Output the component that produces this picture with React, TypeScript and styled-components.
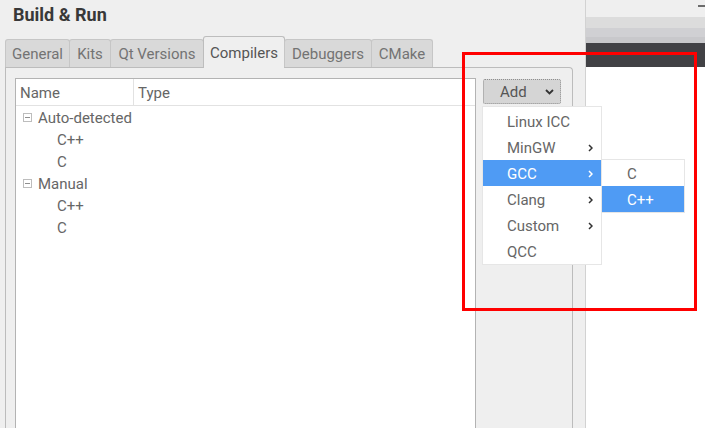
import React from "react";
import styled, { createGlobalStyle } from "styled-components";

const Global = createGlobalStyle`
  html, body { margin: 0; padding: 0; background: #efefef; }
  body { font-family: Roboto, "Liberation Sans", sans-serif; -webkit-font-smoothing: antialiased; }
  * { box-sizing: border-box; }
`;

const Root = styled.div`
  position: relative;
  display: flex;
  width: 705px;
  height: 428px;
  overflow: hidden;
  background: #efefef;
`;

const Dialog = styled.div`
  display: flex;
  flex-direction: column;
  width: 586px;
  height: 100%;
  border-right: 1px solid #d2d2d2;
  background: #efefef;
`;

const Title = styled.div`
  padding: 4px 0 0 13px;
  height: 26px;
  font-size: 18px;
  line-height: 22px;
  font-weight: 700;
  color: #383838;
`;

const TabBar = styled.div`
  display: flex;
  align-items: flex-end;
  margin: 10px 0 0 5px;
  height: 31px;
  position: relative;
  z-index: 2;
`;

const Tab = styled.div<{ $active?: boolean; $w: number }>`
  display: flex;
  align-items: center;
  justify-content: center;
  width: ${(p) => p.$w}px;
  padding-top: 1px;
  height: ${(p) => (p.$active ? "32px" : "28px")};
  margin-bottom: ${(p) => (p.$active ? "-1px" : "0")};
  font-size: 15px;
  color: ${(p) => (p.$active ? "#555555" : "#737373")};
  background: ${(p) => (p.$active ? "#efefef" : "#d9d9d9")};
  border: 1px solid ${(p) => (p.$active ? "#bdbdbd" : "#c6c6c6")};
  border-bottom: none;
  border-radius: 3px 3px 0 0;
  margin-left: -1px;
  &:first-child { margin-left: 0; }
`;

const Pane = styled.div`
  flex: 1;
  display: flex;
  gap: 7px;
  margin-left: 5px;
  width: 568px;
  padding: 10px 11px 0 9px;
  border: 1px solid #bcbcbc;
  border-bottom: none;
  border-radius: 0 4px 0 0;
  position: relative;
  z-index: 1;
`;

const List = styled.div`
  width: 461px;
  background: #ffffff;
  border: 1px solid #b3b3b3;
  border-bottom: none;
`;

const Header = styled.div`
  display: flex;
  height: 27px;
  border-bottom: 1px solid #e2e2e2;
  font-size: 15px;
  color: #666666;
`;

const HeaderCell = styled.div<{ $w?: number }>`
  display: flex;
  align-items: center;
  padding: 2px 0 0 4px;
  width: ${(p) => (p.$w ? `${p.$w}px` : "auto")};
  flex: ${(p) => (p.$w ? "none" : "1")};
  border-right: ${(p) => (p.$w ? "1px solid #e2e2e2" : "none")};
`;

const Row = styled.div<{ $indent: number }>`
  display: flex;
  align-items: center;
  height: 22px;
  padding-top: 1px;
  padding-left: ${(p) => p.$indent}px;
  font-size: 15px;
  color: #666666;
`;

const Expander = styled.span`
  position: relative;
  display: inline-block;
  width: 9px;
  height: 9px;
  margin-right: 6px;
  border: 1px solid #bdbdbd;
  &::after {
    content: "";
    position: absolute;
    left: 1px;
    right: 1px;
    top: 3px;
    height: 1px;
    background: #8f8f8f;
  }
`;

const ButtonCol = styled.div`
  position: relative;
  width: 78px;
  padding-top: 1px;
`;

const AddButton = styled.div`
  display: flex;
  align-items: center;
  justify-content: space-between;
  height: 25px;
  padding: 1px 6px 0 16px;
  background: #d5d5d5;
  border: 1px dotted #8e8e8e;
  border-radius: 2px;
  font-size: 15px;
  color: #555555;
`;

const Menu = styled.div`
  position: absolute;
  top: 28px;
  left: -1px;
  width: 120px;
  padding-top: 1px;
  background: #ffffff;
  border: 1px solid #e6e6e6;
  z-index: 5;
`;

const MenuItem = styled.div<{ $active?: boolean }>`
  position: relative;
  display: flex;
  align-items: center;
  justify-content: space-between;
  height: 26px;
  padding: 2px 8px 0 24px;
  font-size: 15px;
  color: ${(p) => (p.$active ? "#ffffff" : "#666666")};
  background: ${(p) => (p.$active ? "#4f9bf4" : "transparent")};
`;

const SubMenu = styled.div`
  position: absolute;
  top: -1px;
  left: 118px;
  width: 84px;
  background: #ffffff;
  border: 1px solid #e6e6e6;
`;

const SubItem = styled.div<{ $active?: boolean }>`
  display: flex;
  align-items: center;
  height: 26px;
  padding: 2px 0 0 25px;
  font-size: 15px;
  color: ${(p) => (p.$active ? "#ffffff" : "#666666")};
  background: ${(p) => (p.$active ? "#4f9bf4" : "transparent")};
`;

const Backdrop = styled.div`
  flex: 1;
  display: flex;
  flex-direction: column;
`;

const Strip = styled.div<{ $h: number; $bg: string }>`
  position: relative;
  height: ${(p) => p.$h}px;
  background: ${(p) => p.$bg};
`;

const Dash = styled.div`
  position: absolute;
  right: 0;
  top: 5px;
  width: 7px;
  height: 2px;
  background: #6c6c6c;
`;

const Canvas = styled.div`
  flex: 1;
  background: #ffffff;
`;

const Highlight = styled.div`
  position: absolute;
  left: 462px;
  top: 52px;
  width: 235px;
  height: 259px;
  border: 3px solid #ff0000;
  z-index: 10;
  pointer-events: none;
`;

const Chevron = () => (
  <svg width="9" height="6" viewBox="0 0 9 6">
    <polyline points="1,1 4.5,4.5 8,1" fill="none" stroke="#333" strokeWidth="1.8" />
  </svg>
);

const Arrow = ({ color }: { color: string }) => (
  <svg width="5" height="8" viewBox="0 0 5 8">
    <polyline points="1,1 4,4 1,7" fill="none" stroke={color} strokeWidth="1.5" />
  </svg>
);

const tabs: { label: string; w: number }[] = [
  { label: "General", w: 65 },
  { label: "Kits", w: 42 },
  { label: "Qt Versions", w: 94 },
  { label: "Compilers", w: 82 },
  { label: "Debuggers", w: 88 },
  { label: "CMake", w: 62 },
];

const menuItems: { label: string; sub?: boolean }[] = [
  { label: "Linux ICC" },
  { label: "MinGW", sub: true },
  { label: "GCC", sub: true },
  { label: "Clang", sub: true },
  { label: "Custom", sub: true },
  { label: "QCC" },
];

export default function App() {
  return (
    <>
      <Global />
      <Root>
        <Dialog>
          <Title>Build &amp; Run</Title>
          <TabBar>
            {tabs.map((t) => (
              <Tab key={t.label} $w={t.w} $active={t.label === "Compilers"}>
                {t.label}
              </Tab>
            ))}
          </TabBar>
          <Pane>
            <List>
              <Header>
                <HeaderCell $w={118}>Name</HeaderCell>
                <HeaderCell>Type</HeaderCell>
              </Header>
              <Row $indent={7}>
                <Expander />
                Auto-detected
              </Row>
              <Row $indent={41}>C++</Row>
              <Row $indent={41}>C</Row>
              <Row $indent={7}>
                <Expander />
                Manual
              </Row>
              <Row $indent={41}>C++</Row>
              <Row $indent={41}>C</Row>
            </List>
            <ButtonCol>
              <AddButton>
                <span>Add</span>
                <Chevron />
              </AddButton>
              <Menu>
                {menuItems.map((m) => (
                  <MenuItem key={m.label} $active={m.label === "GCC"}>
                    <span>{m.label}</span>
                    {m.sub && <Arrow color={m.label === "GCC" ? "#ffffff" : "#333333"} />}
                    {m.label === "GCC" && (
                      <SubMenu>
                        <SubItem>C</SubItem>
                        <SubItem $active>C++</SubItem>
                      </SubMenu>
                    )}
                  </MenuItem>
                ))}
              </Menu>
            </ButtonCol>
          </Pane>
        </Dialog>
        <Backdrop>
          <Strip $h={17} $bg="#efefef">
            <Dash />
          </Strip>
          <Strip $h={11} $bg="#dcdcdc" />
          <Strip $h={9} $bg="#d0d0d3" />
          <Strip $h={6} $bg="#c8c8cb" />
          <Strip $h={24} $bg="#414145" />
          <Canvas />
        </Backdrop>
        <Highlight />
      </Root>
    </>
  );
}
